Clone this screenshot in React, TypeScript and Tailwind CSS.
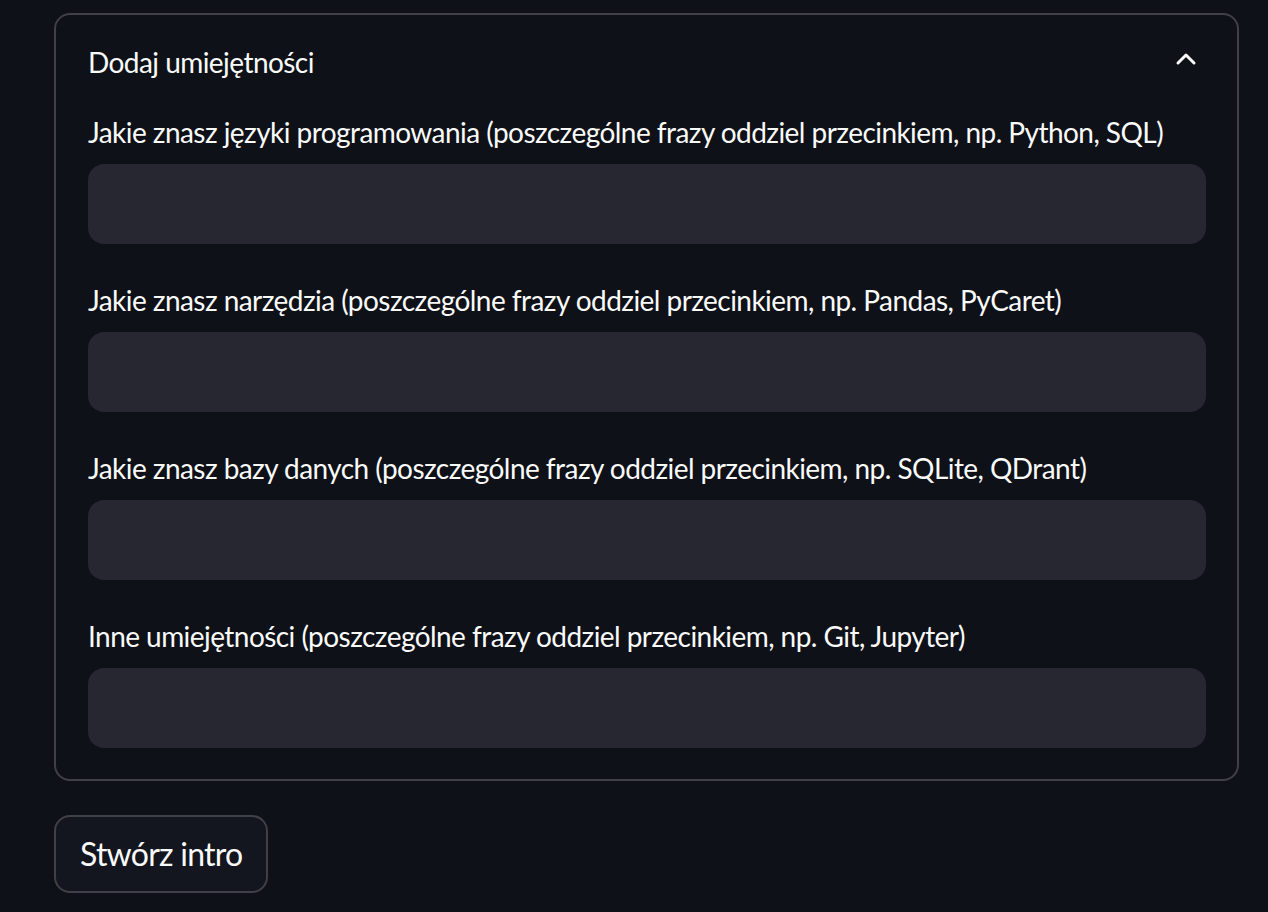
import { ChevronUp } from "lucide-react";

const fields = [
  "Jakie znasz języki programowania (poszczególne frazy oddziel przecinkiem, np. Python, SQL)",
  "Jakie znasz narzędzia (poszczególne frazy oddziel przecinkiem, np. Pandas, PyCaret)",
  "Jakie znasz bazy danych (poszczególne frazy oddziel przecinkiem, np. SQLite, QDrant)",
  "Inne umiejętności (poszczególne frazy oddziel przecinkiem, np. Git, Jupyter)",
];

export default function App() {
  return (
    <div
      className="min-h-[912px] bg-[#0e1117] pl-[54px] pr-[29px] pt-[13px] text-[#fafafa]"
      style={{ fontFamily: "Lato, 'Noto Sans', sans-serif" }}
    >
      {/* expander */}
      <div className="rounded-[16px] border-2 border-[#3f4147] pb-[31px]">
        <div className="flex h-[94px] items-center justify-between pl-[32px] pr-[35px]">
          <span className="text-[28px] leading-[44px] tracking-[-0.55px]">Dodaj umiejętności</span>
          <ChevronUp size={32} strokeWidth={2.25} className="-mt-[6px] text-[#fafafa]" />
        </div>

        <div className="flex flex-col gap-[34px] pl-[32px] pr-[31px] pt-[1px]">
          {fields.map((label) => (
            <div key={label} className="flex flex-col gap-[10px]">
              <label className="h-[44px] whitespace-nowrap text-[28px] leading-[44px] tracking-[-0.55px]">
                {label}
              </label>
              <input
                type="text"
                className="h-[80px] w-full rounded-[16px] bg-[#262730] px-[24px] text-[28px] text-[#fafafa] outline-none"
              />
            </div>
          ))}
        </div>
      </div>

      <button className="mt-[34px] h-[78px] rounded-[16px] border-2 border-[#3f4147] bg-[#13161e] px-[24px] text-[32px] leading-[44px] tracking-[-0.75px] text-[#fafafa]">
        Stwórz intro
      </button>
    </div>
  );
}
